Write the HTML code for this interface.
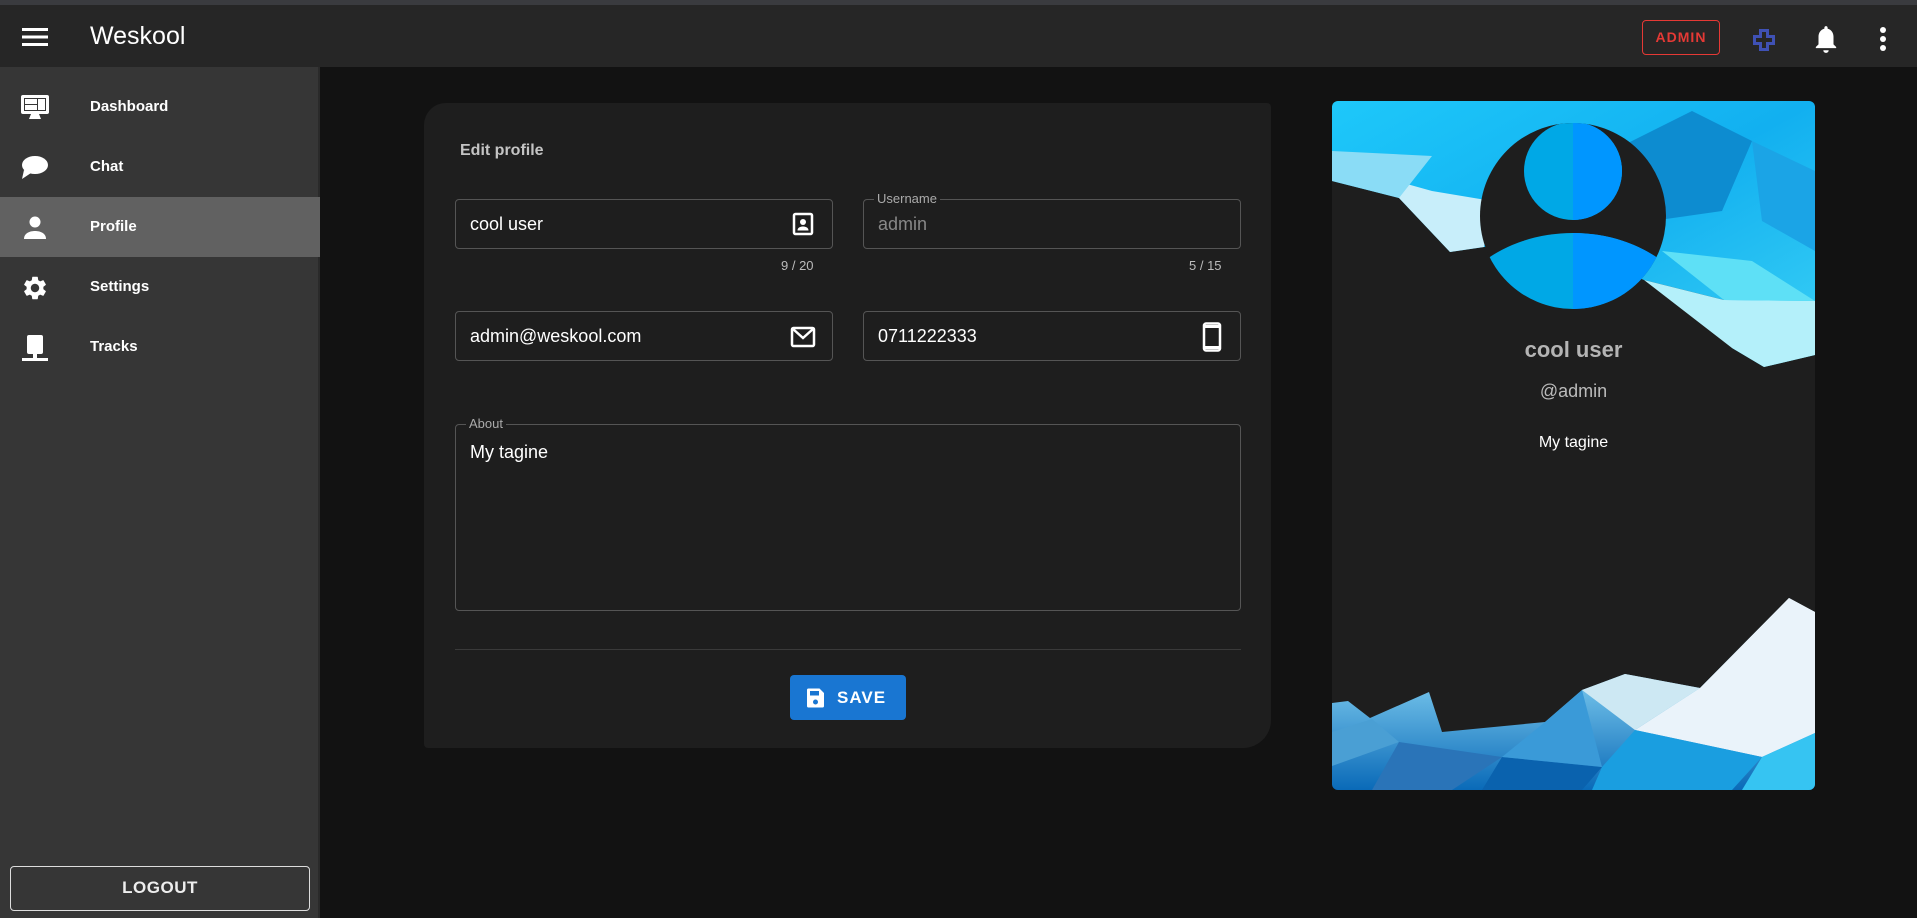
<!DOCTYPE html>
<html><head><meta charset="utf-8"><style>
*{box-sizing:border-box;margin:0;padding:0}
body{width:1917px;height:918px;background:#121212;font-family:"Liberation Sans",sans-serif;position:relative;overflow:hidden;color:#fff}
.strip{position:absolute;left:0;top:0;width:1917px;height:5px;background:#3a3b3f}
.hdr{position:absolute;left:0;top:5px;width:1917px;height:62px;background:#262626}
.side{position:absolute;left:0;top:67px;width:320px;height:851px;background:#363636;border-right:2px solid #2a2a2a}
.item{position:absolute;left:0;width:320px;height:60px;font-weight:bold;font-size:15px}
.item span{position:absolute;left:90px;top:21px}
.item svg{position:absolute;left:20px;top:17px}
.card{position:absolute;left:424px;top:103px;width:847px;height:645px;background:#1e1e1e;border-radius:22px 4px 28px 4px}
.fld{position:absolute;border:1px solid #555;border-radius:4px;height:50px}
.fld .v{position:absolute;left:14px;top:14px;font-size:18px;color:#fff}
.lbl{position:absolute;top:-9px;left:10px;background:#1e1e1e;padding:0 3px;font-size:13px;color:#aaa}
.cnt{position:absolute;font-size:13px;color:#bbb}
.pc{position:absolute;left:1332px;top:101px;width:483px;height:689px;background:#1e1e1e;border-radius:6px;overflow:hidden}
</style></head><body>
<div class="strip"></div>
<div class="hdr">
<svg style="position:absolute;left:22px;top:23px" width="26" height="18"><rect y="0" width="26" height="3" fill="#fff"/><rect y="7.5" width="26" height="3" fill="#fff"/><rect y="15" width="26" height="3" fill="#fff"/></svg>
<div style="position:absolute;left:90px;top:17px;font-size:25px">Weskool</div>
<div style="position:absolute;left:1642px;top:15px;width:78px;height:35px;border:1.5px solid #e53935;border-radius:4px;color:#e53935;font-weight:bold;font-size:14px;letter-spacing:1px;text-align:center;line-height:32px">ADMIN</div>
<svg style="position:absolute;left:1753px;top:24px" width="22" height="22" viewBox="0 0 22 22"><path d="M7.5 1.5h7v6h6v7h-6v6h-7v-6h-6v-7h6z" fill="none" stroke="#3f51b5" stroke-width="3"/></svg>
<svg style="position:absolute;left:1813px;top:19px" width="26" height="30" viewBox="0 0 24 28"><path d="M12 2c1 0 1.5.7 1.5 1.5v.8C17 5.2 19 8.3 19 12v7l2.5 2.5v1H2.5v-1L5 19v-7c0-3.7 2-6.8 5.5-7.7v-.8C10.5 2.7 11 2 12 2zM9.5 24.5h5a2.5 2.5 0 01-5 0z" fill="#fff"/></svg>
<svg style="position:absolute;left:1878px;top:20px" width="10" height="28"><circle cx="5" cy="5" r="3" fill="#fff"/><circle cx="5" cy="14" r="3" fill="#fff"/><circle cx="5" cy="23" r="3" fill="#fff"/></svg>
</div>
<div class="side">
<div class="item" style="top:10px"><svg width="30" height="28" viewBox="0 0 30 28"><rect x="1" y="1" width="28" height="19" rx="2" fill="#fff"/><rect x="4" y="4" width="22" height="13" fill="#363636"/><rect x="5" y="5" width="12" height="5" fill="#fff"/><rect x="18" y="5" width="7" height="11" fill="#fff"/><rect x="5" y="11" width="12" height="5" fill="#fff"/><path d="M11 20h8l2 5H9z" fill="#fff"/></svg><span>Dashboard</span></div>
<div class="item" style="top:70px"><svg width="30" height="28" viewBox="0 0 30 28"><ellipse cx="15" cy="11" rx="13" ry="9" fill="#fff"/><path d="M4 16L2 25l9-6z" fill="#fff"/></svg><span>Chat</span></div>
<div class="item" style="top:130px;background:#616161"><svg width="30" height="28" viewBox="0 0 30 28"><circle cx="15" cy="8" r="5.5" fill="#fff"/><path d="M4 25c0-6 6-8 11-8s11 2 11 8z" fill="#fff"/></svg><span>Profile</span></div>
<div class="item" style="top:190px"><svg width="30" height="28" viewBox="0 0 24 24"><path fill="#fff" d="M19.14 12.94c.04-.3.06-.61.06-.94s-.02-.64-.07-.94l2.03-1.58a.49.49 0 00.12-.61l-1.92-3.32a.488.488 0 00-.59-.22l-2.39.96c-.5-.38-1.03-.7-1.62-.94l-.36-2.54a.484.484 0 00-.48-.41h-3.84c-.24 0-.43.17-.47.41l-.36 2.54c-.59.24-1.13.57-1.62.94l-2.39-.96c-.22-.08-.47 0-.59.22L2.74 8.87c-.12.21-.08.47.12.61l2.03 1.58c-.05.3-.09.63-.09.94s.02.64.07.94l-2.03 1.58a.49.49 0 00-.12.61l1.92 3.32c.12.22.37.29.59.22l2.39-.96c.5.38 1.03.7 1.62.94l.36 2.54c.05.24.24.41.48.41h3.84c.24 0 .44-.17.47-.41l.36-2.54c.59-.24 1.13-.56 1.62-.94l2.39.96c.22.08.47 0 .59-.22l1.92-3.32c.12-.22.07-.47-.12-.61l-2.01-1.58zM12 15.6c-1.98 0-3.6-1.62-3.6-3.6s1.62-3.6 3.6-3.6 3.6 1.62 3.6 3.6-1.62 3.6-3.6 3.6z"/></svg><span>Settings</span></div>
<div class="item" style="top:250px"><svg width="30" height="30" viewBox="0 0 30 30"><rect x="7" y="1" width="16" height="19" rx="2" fill="#fff"/><rect x="13" y="20" width="4" height="5" fill="#fff"/><rect x="2" y="24" width="26" height="3" fill="#fff"/></svg><span>Tracks</span></div>
<div style="position:absolute;left:10px;top:799px;width:300px;height:45px;border:1.5px solid #ddd;border-radius:4px;text-align:center;line-height:42px;font-weight:bold;font-size:17px;letter-spacing:.5px;color:#eee">LOGOUT</div>
</div>

<div class="card">
<div style="position:absolute;left:36px;top:39px;font-size:16px;font-weight:bold;color:#c4c4c4">Edit profile</div>
<div class="fld" style="left:31px;top:96px;width:378px"><div class="v">cool user</div>
<svg style="position:absolute;right:18px;top:12px" width="22" height="24" viewBox="0 0 22 24"><rect x="2" y="2" width="18" height="20" rx="1.5" fill="none" stroke="#fff" stroke-width="2.5"/><circle cx="11" cy="10" r="3" fill="#fff"/><path d="M5.5 18.5c0-3 3-4 5.5-4s5.5 1 5.5 4z" fill="#fff"/></svg></div>
<div class="cnt" style="left:357px;top:155px">9 / 20</div>
<div class="fld" style="left:439px;top:96px;width:378px"><div class="lbl">Username</div><div class="v" style="color:#888">admin</div></div>
<div class="cnt" style="left:765px;top:155px">5 / 15</div>
<div class="fld" style="left:31px;top:208px;width:378px"><div class="v">admin@weskool.com</div>
<svg style="position:absolute;right:16px;top:14px" width="26" height="22" viewBox="0 0 26 22"><rect x="2" y="2" width="22" height="18" rx="1.5" fill="none" stroke="#fff" stroke-width="2.5"/><path d="M3 3l10 9 10-9" fill="none" stroke="#fff" stroke-width="2.5"/></svg></div>
<div class="fld" style="left:439px;top:208px;width:378px"><div class="v">0711222333</div>
<svg style="position:absolute;right:18px;top:10px" width="20" height="30" viewBox="0 0 20 30"><rect x="2" y="1.5" width="16" height="27" rx="2" fill="none" stroke="#fff" stroke-width="2.5"/><rect x="2" y="3" width="16" height="3" fill="#fff"/><rect x="2" y="24" width="16" height="3" fill="#fff"/></svg></div>
<div class="fld" style="left:31px;top:321px;width:786px;height:187px"><div class="lbl" style="top:-9px;left:10px">About</div><div class="v" style="top:17px">My tagine</div></div>
<div style="position:absolute;left:31px;top:546px;width:786px;height:1px;background:#3a3a3a"></div>
<div style="position:absolute;left:366px;top:572px;width:116px;height:45px;background:#1976d2;border-radius:4px;font-weight:bold;font-size:17px;letter-spacing:1px">
<svg style="position:absolute;left:16px;top:13px" width="19" height="20" viewBox="0 0 19 20"><path d="M1 2a1.5 1.5 0 011.5-1.5h11l4.5 4.5v13a1.5 1.5 0 01-1.5 1.5h-14A1.5 1.5 0 011 18z" fill="#fff"/><rect x="4" y="3" width="9" height="4.5" fill="#1976d2"/><circle cx="9.5" cy="14" r="2.5" fill="#1976d2"/></svg>
<span style="position:absolute;left:47px;top:13px">SAVE</span></div>
</div>

<div class="pc">
<svg width="483" height="689" viewBox="0 0 483 689" style="position:absolute;left:0;top:0">
<defs>
<linearGradient id="tg" x1="0" y1="0" x2="1" y2="1"><stop offset="0" stop-color="#1ec8fa"/><stop offset=".5" stop-color="#12b0f0"/><stop offset="1" stop-color="#3ad0f5"/></linearGradient>
<linearGradient id="bg" x1="0" y1="0" x2="0" y2="1"><stop offset="0" stop-color="#e6f4fa"/><stop offset=".4" stop-color="#7ccaee"/><stop offset="1" stop-color="#0a6ab8"/></linearGradient>
<clipPath id="cc"><circle cx="241" cy="115" r="93"/></clipPath>
</defs>
<polygon points="0,0 483,0 483,254 432,266 400,247 392,199 312,179 241,150 152,146 118,151 67,97 0,80" fill="url(#tg)"/>
<polygon points="0,66 67,97 118,151 152,146 160,100 100,90 0,62" fill="#c8eefa"/>
<polygon points="0,50 100,55 67,97 0,80" fill="#8adcf6"/>
<polygon points="260,60 360,10 420,40 390,110 320,120" fill="#0d8cd0"/>
<polygon points="420,40 483,70 483,150 430,120" fill="#1ba4e6"/>
<polygon points="312,179 392,199 483,200 483,254 432,266 400,247" fill="#b4f0fa"/>
<polygon points="330,150 420,160 483,200 392,199" fill="#5ee0f6"/>
<polygon points="0,602 16,600 38,617 97,591 110,631 213,621 250,589 293,573 368,587 457,497 483,511 483,689 0,689" fill="url(#bg)"/>
<polygon points="368,587 457,497 483,511 483,632 430,656 303,629" fill="#eaf3fa"/>
<polygon points="250,589 293,573 368,587 303,629" fill="#cde8f3"/>
<polygon points="0,631 40,618 67,641 0,665" fill="#4a9fd4"/>
<polygon points="67,641 170,656 120,689 40,689" fill="#2a74b8"/>
<polygon points="170,656 270,666 250,689 150,689" fill="#0a62ae"/>
<polygon points="270,666 303,629 430,656 400,689 260,689" fill="#1a9ee0"/>
<polygon points="430,656 483,632 483,689 410,689" fill="#36c4f2"/>
<polygon points="213,621 250,589 270,666 170,656" fill="#3a9ad8"/>
<circle cx="241" cy="115" r="93" fill="#1e1e1e"/>
<g clip-path="url(#cc)">
<circle cx="241" cy="70" r="49" fill="#00a8e6"/>
<path d="M241 21a49 49 0 010 98z" fill="#0096ff"/>
<ellipse cx="241" cy="232" rx="128" ry="100" fill="#00a8e6"/>
<path d="M241 132a128 100 0 010 200z" fill="#0096ff"/>
</g>
</svg>
<div style="position:absolute;left:0;width:483px;top:236px;text-align:center;font-size:22px;font-weight:bold;color:#b4b4b4">cool user</div>
<div style="position:absolute;left:0;width:483px;top:280px;text-align:center;font-size:18px;color:#bbb">@admin</div>
<div style="position:absolute;left:0;width:483px;top:333px;text-align:center;font-size:16px;color:#fff">My tagine</div>
</div>
</body></html>
